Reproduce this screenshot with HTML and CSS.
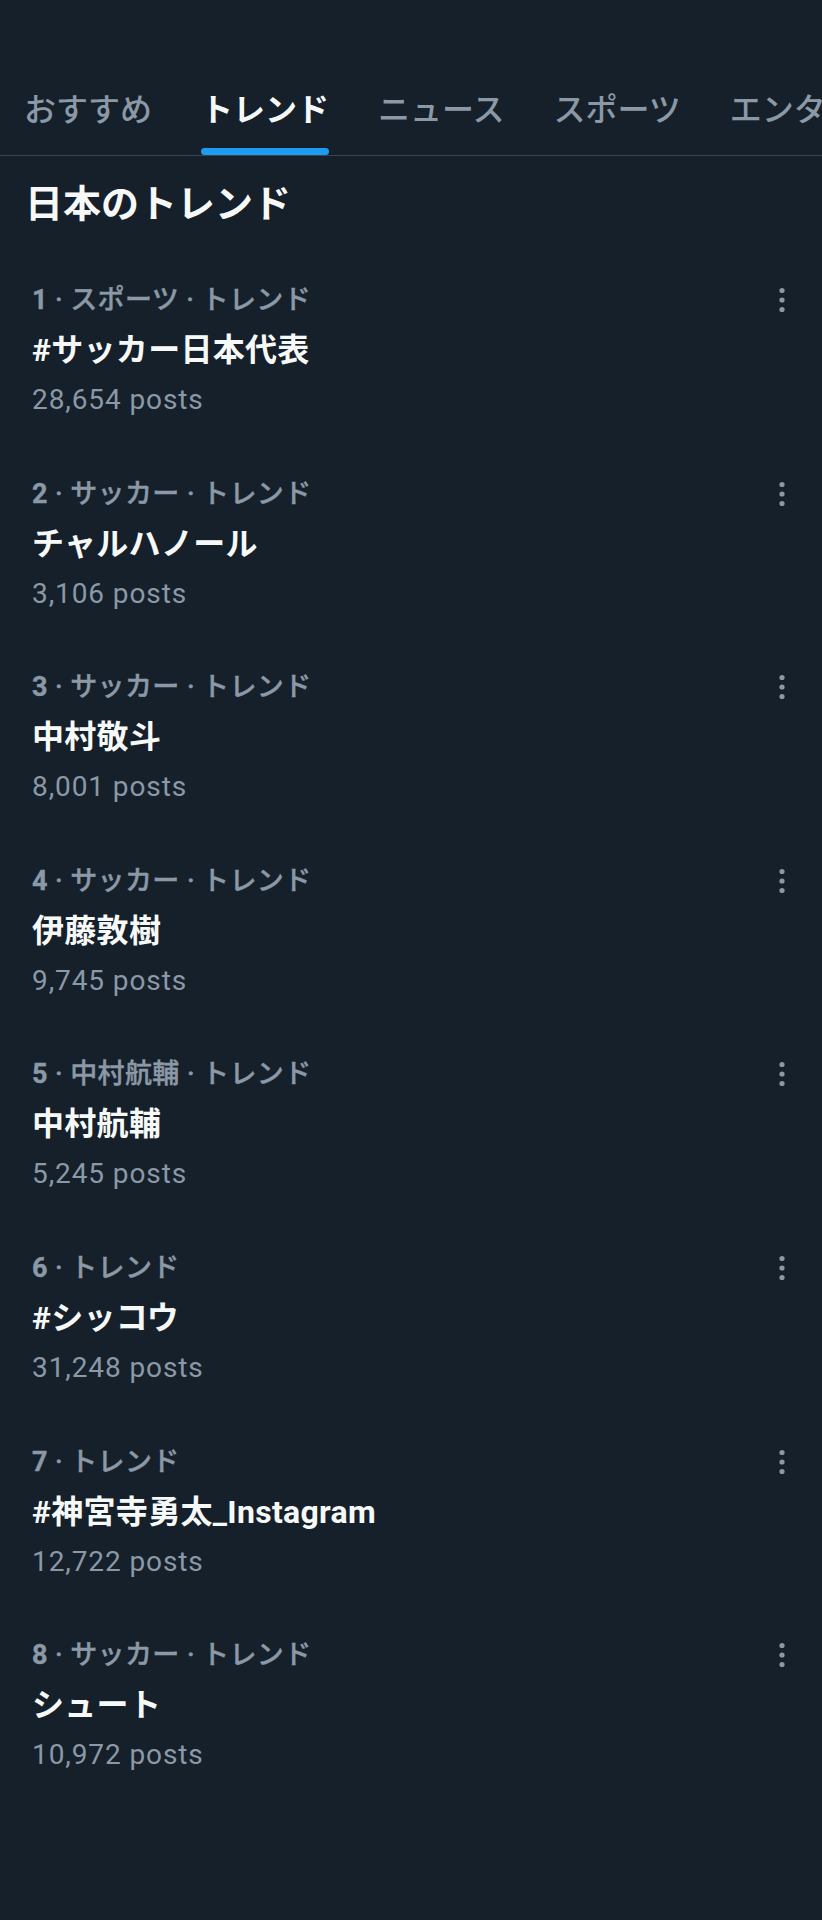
FILE: index.html
```html
<!DOCTYPE html>
<html lang="ja">
<head>
    <meta charset="UTF-8">
    <title>トレンド</title>
    <meta name="viewport" content="width=device-width, initial-scale=1.0">
    <link rel="stylesheet" href="styles.css">
</head>
<body>
    <nav class="tabs">
        <div class="tab">おすすめ</div>
        <div class="tab active">トレンド</div>
        <div class="tab">ニュース</div>
        <div class="tab">スポーツ</div>
        <div class="tab">エンタメ</div>
    </nav>

    <h2 class="section-title">日本のトレンド</h2>

    <ul class="trends">
        <li class="trend">
            <div class="meta"><span><b>1</b> · スポーツ · トレンド</span><svg class="more" viewBox="0 0 20 30"><circle cx="10" cy="5.5" r="2.6"/><circle cx="10" cy="15" r="2.6"/><circle cx="10" cy="24.5" r="2.6"/></svg></div>
            <div class="name">#サッカー日本代表</div>
            <div class="count">28,654 posts</div>
        </li>
        <li class="trend">
            <div class="meta"><span><b>2</b> · サッカー · トレンド</span><svg class="more" viewBox="0 0 20 30"><circle cx="10" cy="5.5" r="2.6"/><circle cx="10" cy="15" r="2.6"/><circle cx="10" cy="24.5" r="2.6"/></svg></div>
            <div class="name">チャルハノール</div>
            <div class="count">3,106 posts</div>
        </li>
        <li class="trend">
            <div class="meta"><span><b>3</b> · サッカー · トレンド</span><svg class="more" viewBox="0 0 20 30"><circle cx="10" cy="5.5" r="2.6"/><circle cx="10" cy="15" r="2.6"/><circle cx="10" cy="24.5" r="2.6"/></svg></div>
            <div class="name">中村敬斗</div>
            <div class="count">8,001 posts</div>
        </li>
        <li class="trend">
            <div class="meta"><span><b>4</b> · サッカー · トレンド</span><svg class="more" viewBox="0 0 20 30"><circle cx="10" cy="5.5" r="2.6"/><circle cx="10" cy="15" r="2.6"/><circle cx="10" cy="24.5" r="2.6"/></svg></div>
            <div class="name">伊藤敦樹</div>
            <div class="count">9,745 posts</div>
        </li>
        <li class="trend">
            <div class="meta"><span><b>5</b> · 中村航輔 · トレンド</span><svg class="more" viewBox="0 0 20 30"><circle cx="10" cy="5.5" r="2.6"/><circle cx="10" cy="15" r="2.6"/><circle cx="10" cy="24.5" r="2.6"/></svg></div>
            <div class="name">中村航輔</div>
            <div class="count">5,245 posts</div>
        </li>
        <li class="trend">
            <div class="meta"><span><b>6</b> · トレンド</span><svg class="more" viewBox="0 0 20 30"><circle cx="10" cy="5.5" r="2.6"/><circle cx="10" cy="15" r="2.6"/><circle cx="10" cy="24.5" r="2.6"/></svg></div>
            <div class="name">#シッコウ</div>
            <div class="count">31,248 posts</div>
        </li>
        <li class="trend">
            <div class="meta"><span><b>7</b> · トレンド</span><svg class="more" viewBox="0 0 20 30"><circle cx="10" cy="5.5" r="2.6"/><circle cx="10" cy="15" r="2.6"/><circle cx="10" cy="24.5" r="2.6"/></svg></div>
            <div class="name">#神宮寺勇太_Instagram</div>
            <div class="count">12,722 posts</div>
        </li>
        <li class="trend">
            <div class="meta"><span><b>8</b> · サッカー · トレンド</span><svg class="more" viewBox="0 0 20 30"><circle cx="10" cy="5.5" r="2.6"/><circle cx="10" cy="15" r="2.6"/><circle cx="10" cy="24.5" r="2.6"/></svg></div>
            <div class="name">シュート</div>
            <div class="count">10,972 posts</div>
        </li>
    </ul>
</body>
</html>
```

FILE: styles.css
```css
html {
    background: #15202b;
}
body {
    margin: 0;
    min-height: 1920px;
    background: #15202b;
    color: #f7f9f9;
    font-family: 'Roboto', 'Noto Sans CJK JP', sans-serif;
    overflow: hidden;
}
.tabs {
    display: flex;
    gap: 49px;
    padding-left: 24px;
    border-bottom: 1px solid #38444d;
    white-space: nowrap;
    overflow: hidden;
}
.tab {
    flex-shrink: 0;
    padding-top: 89px;
    font-size: 32px;
    line-height: 42px;
    font-weight: 500;
    color: #8b98a5;
}
.tab::after {
    content: '';
    display: block;
    height: 7px;
    margin-top: 17px;
    border-radius: 4px;
}
.tab.active {
    color: #f7f9f9;
    font-weight: 700;
}
.tab.active::after {
    background: #1d9bf0;
}
.section-title {
    margin: 23px 0 0 0;
    padding-left: 25px;
    font-size: 38px;
    line-height: 50px;
    font-weight: 700;
}
.trends {
    list-style: none;
    margin: 0;
    padding: 24px 0 0 0;
}
.trend {
    padding: 22px 30px 21.6px 32px;
}
.meta {
    display: flex;
    justify-content: space-between;
    align-items: center;
    font-size: 27px;
    line-height: 50px;
    font-weight: 500;
    letter-spacing: 0.4px;
    color: #8b98a5;
    -webkit-text-stroke: 0.4px #8b98a5;
}
.meta b {
    font-weight: 700;
}
.more {
    width: 20px;
    height: 30px;
    fill: #8b98a5;
}
.name {
    font-size: 32px;
    line-height: 50px;
    font-weight: 700;
    letter-spacing: 0.3px;
}
.count {
    font-size: 28px;
    line-height: 50px;
    color: #8b98a5;
    letter-spacing: 0.9px;
}
```
